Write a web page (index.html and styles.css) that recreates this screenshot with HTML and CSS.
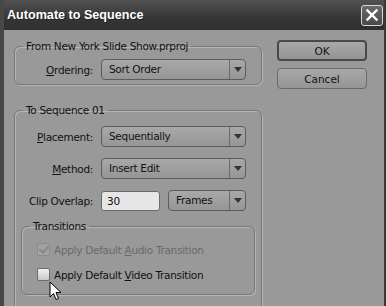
FILE: index.html
```html
<!DOCTYPE html>
<html lang="en">
<head>
    <meta charset="UTF-8">
    <title>Automate to Sequence</title>
    <link rel="stylesheet" href="styles.css">
</head>
<body>

<div class="dialog">
    <div class="titlebar">
        <span class="title">Automate to Sequence</span>
        <span class="close">
            <svg width="14" height="14" viewBox="0 0 14 14"><path d="M2.5 2.5 L11.5 11.5 M11.5 2.5 L2.5 11.5" stroke="#fff" stroke-width="2.4" stroke-linecap="square"/></svg>
        </span>
    </div>

    <div class="body">
        <div class="main">
            <fieldset class="group from">
                <legend>From New York Slide Show.prproj</legend>
                <div class="row">
                    <label class="lbl"><u>O</u>rdering:</label>
                    <div class="select wide"><span>Sort Order</span><i class="arrow"></i></div>
                </div>
            </fieldset>

            <fieldset class="group seq">
                <legend>To Sequence 01</legend>
                <div class="row">
                    <label class="lbl"><u>P</u>lacement:</label>
                    <div class="select wide"><span>Sequentially</span><i class="arrow"></i></div>
                </div>
                <div class="row">
                    <label class="lbl"><u>M</u>ethod:</label>
                    <div class="select wide"><span>Insert Edit</span><i class="arrow"></i></div>
                </div>
                <div class="row">
                    <label class="lbl">Clip Overlap:</label>
                    <div class="field">30</div>
                    <div class="select small"><span>Frames</span><i class="arrow"></i></div>
                </div>

                <fieldset class="group trans">
                    <legend>Transitions</legend>
                    <div class="check disabled"><span class="box checked"></span><span>Apply Default <u>A</u>udio Transition</span></div>
                    <div class="check"><span class="box"></span><span>Apply Default <u>V</u>ideo Transition</span></div>
                </fieldset>
            </fieldset>
        </div>

        <div class="buttons">
            <button class="btn default">OK</button>
            <button class="btn">Cancel</button>
        </div>
    </div>

    <svg class="cursor" width="14" height="21" viewBox="0 0 14 21"><path d="M1 1 L1 16 L4.5 12.5 L7 18.5 L9.5 17.5 L7 11.5 L12 11.5 Z" fill="#fff" stroke="#000" stroke-width="1"/></svg>
</div>

</body>
</html>
```

FILE: styles.css
```css
body {
    margin: 0;
    background-color: #999;
    font-family: "DejaVu Sans", sans-serif;
    font-size: 10.5px;
    letter-spacing: -0.3px;
    color: #111;
}

.dialog {
    position: relative;
    width: 386px;
    height: 306px;
    overflow: hidden;
    border-left: 4px solid #474747;
    border-right: 2px solid #3a3a3a;
    box-sizing: border-box;
}

.titlebar {
    height: 30px;
    background: linear-gradient(#525252, #363636 60%, #303030);
    display: flex;
    align-items: center;
    justify-content: space-between;
    margin: 0 -2px 0 -4px;
    padding-left: 7px;
    padding-right: 3px;
}

.title {
    color: #fff;
    font-family: "Liberation Sans", Arial, sans-serif;
    font-weight: bold;
    font-size: 12.6px;
    letter-spacing: 0;
    text-shadow: 1px 1px 0 #222;
}

.close {
    width: 20px;
    height: 19px;
    border: 1px solid #d8d8d8;
    border-radius: 3px;
    background: linear-gradient(#6a6a6a, #484848);
    display: flex;
    align-items: center;
    justify-content: center;
}

.body {
    display: flex;
    padding: 10px 0 0 10px;
    gap: 15px;
}

.main {
    width: 248px;
}

.group {
    border: 1px solid #777;
    box-shadow: inset 1px 1px 0 #b5b5b5, 1px 1px 0 #b5b5b5;
    border-radius: 6px;
    margin: 0;
    padding: 0;
}

.group legend {
    padding: 0 3px;
    margin-left: 8px;
}

.from {
    height: 36px;
    padding-top: 7px;
}

.seq {
    margin-top: 19px;
    height: 220px;
    padding-top: 10px;
}

.row {
    display: flex;
    align-items: center;
    gap: 8px;
    margin-bottom: 11px;
}

.lbl {
    width: 78px;
    text-align: right;
}

.select {
    height: 19px;
    border: 1px solid #5c5c5c;
    border-radius: 4px;
    background: linear-gradient(#a8a8a8, #969696);
    display: flex;
    align-items: center;
}

.select span {
    flex: 1;
    padding-left: 7px;
    border-right: 1px solid #6a6a6a;
    height: 19px;
    line-height: 19px;
}

.arrow {
    width: 15px;
    height: 19px;
    position: relative;
}

.arrow::after {
    content: "";
    position: absolute;
    left: 4px;
    top: 7px;
    border-left: 4px solid transparent;
    border-right: 4px solid transparent;
    border-top: 5px solid #333;
}

.wide {
    width: 143px;
}

.small {
    width: 76px;
}

.field {
    width: 52px;
    height: 18px;
    line-height: 18px;
    padding-left: 5px;
    border: 1px solid #6a6a6a;
    border-radius: 3px;
    background-color: #e6e6e6;
}

.trans {
    margin: -2px 6px 0 6px;
    height: 62px;
    padding-top: 11px;
}

.check {
    display: flex;
    align-items: center;
    gap: 4px;
    padding-left: 15px;
    margin-bottom: 12px;
}

.check.disabled {
    color: #6a6a6a;
}

.box {
    width: 11px;
    height: 11px;
    border: 1px solid #6c6c6c;
    border-radius: 2px;
    background: linear-gradient(#f2f2f2, #c8c8c8);
    position: relative;
}

.disabled .box {
    background: #a2a2a2;
    border-color: #8a8a8a;
}

.box.checked::after {
    content: "";
    position: absolute;
    left: 3px;
    top: 0px;
    width: 4px;
    height: 7px;
    border: solid #888;
    border-width: 0 2px 2px 0;
    transform: rotate(40deg);
}

.buttons {
    display: flex;
    flex-direction: column;
    gap: 7px;
}

.btn {
    width: 90px;
    height: 21px;
    border: 1px solid #6a6a6a;
    border-radius: 4px;
    background: linear-gradient(#a8a8a8, #959595);
    font-family: "DejaVu Sans", sans-serif;
    font-size: 10.5px;
    color: #111;
    padding: 0;
}

.btn.default {
    border: 2px solid #4a4a4a;
}

.cursor {
    position: absolute;
    left: 45px;
    top: 281px;
}
```
